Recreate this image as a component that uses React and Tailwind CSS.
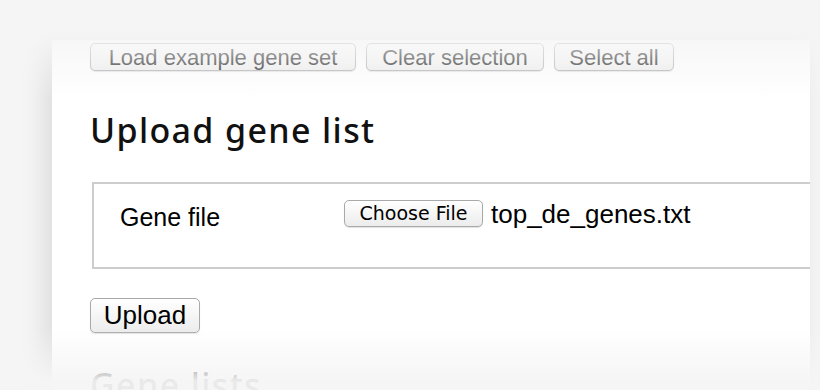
const sans = "font-['Liberation_Sans',Arial,sans-serif]";

const MacButton = ({ children, className = "" }) => (
  <button
    className={`flex items-center justify-center rounded-[5px] border border-[#a9a9a9] bg-linear-to-b from-white to-[#ececec] text-black shadow-[0_1px_1px_rgba(0,0,0,0.12)] ${className}`}
  >
    {children}
  </button>
);

const App = () => {
  return (
    <div className="relative h-[390px] w-[820px] overflow-hidden bg-[#f5f5f5]">
      <div className="h-full pt-[40px] pl-[52px] pr-[10px]">
        <div className="h-full bg-white pl-[38px] pt-[3px] shadow-[-8px_0_24px_rgba(0,0,0,0.10)]">
          {/* toolbar */}
          <div className={`flex h-[28px] gap-[10px] ${sans} text-[22px]`}>
            <MacButton className="w-[266px]">Load example gene set</MacButton>
            <MacButton className="w-[178px]">Clear selection</MacButton>
            <MacButton className="w-[120px]">Select all</MacButton>
          </div>

          <h2 className="mt-[39px] font-['Noto_Sans',sans-serif] text-[34px] font-medium leading-[40px] tracking-[0.04em] text-[#111]">
            Upload gene list
          </h2>

          {/* upload fieldset */}
          <div className="mt-[32px] ml-[2px] flex h-[87px] items-start border-2 border-r-0 border-[#cdcdcd] pt-[16px] pl-[26px]">
            <div className={`mt-[3px] w-[224px] ${sans} text-[25px] leading-[28px] text-black`}>
              Gene file
            </div>
            <MacButton className="h-[27px] w-[139px] font-['DejaVu_Sans',sans-serif] text-[19px]">
              Choose File
            </MacButton>
            <div className={`ml-[8px] ${sans} text-[26px] leading-[28px] text-black`}>
              top_de_genes.txt
            </div>
          </div>

          <MacButton className={`mt-[29px] h-[35px] w-[110px] ${sans} text-[26px] border-[#999]`}>
            Upload
          </MacButton>

          <h2 className="mt-[32px] font-['Noto_Sans',sans-serif] text-[34px] font-medium leading-[40px] tracking-[0.04em] text-[#111]">
            Gene lists
          </h2>
        </div>
      </div>

      {/* fades over the cropped page */}
      <div className="pointer-events-none absolute inset-x-0 top-0 h-[100px] bg-linear-to-b from-[#f5f5f5] from-25% to-[#f5f5f5]/0" />
      <div className="pointer-events-none absolute inset-x-0 bottom-0 h-[62px] bg-linear-to-b from-[#f5f5f5]/0 to-[#f5f5f5]/95 to-85%" />
    </div>
  );
};

export default App;
